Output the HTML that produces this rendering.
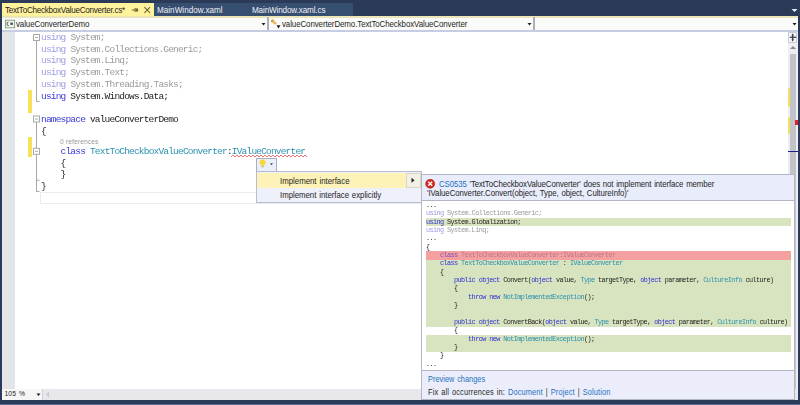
<!DOCTYPE html>
<html><head><meta charset="utf-8">
<style>
*{margin:0;padding:0;box-sizing:border-box}
html,body{width:800px;height:405px;overflow:hidden;background:#2a3a58;font-family:"Liberation Sans",sans-serif;position:relative}
.a{position:absolute}
.ui{position:absolute;transform-origin:0 0;transform:scaleX(0.9);font-family:"Liberation Sans",sans-serif;font-size:8px;white-space:nowrap;line-height:10px;color:#1e1e1e}
.code{position:absolute;will-change:transform;font-family:"Liberation Mono",monospace;font-size:9.5px;letter-spacing:-0.81px;white-space:pre;line-height:11.7px;color:#1e1e1e}
.kw{color:#3a3ad6}
.kwd{color:#9d9de6}
.dim{color:#9a9a9a}
.ty{color:#2b91af}
.pv{position:absolute;will-change:transform;font-family:"Liberation Mono",monospace;font-size:6.8px;letter-spacing:-0.57px;white-space:pre;line-height:8.34px;color:#1e1e1e}
.pv .kw{color:#3030d0}
.lnk{color:#1e6fbf}
.row{position:absolute;left:426px;width:365px;height:8.38px}
.g{background:#d8e4bf}
.r{background:#f5a0a0}
</style></head><body>
<!-- tabs -->
<div class="a" style="left:2px;top:3px;width:152px;height:14px;background:#fff29d"></div>
<div class="ui" style="left:5px;top:5.3px;font-size:9px;letter-spacing:-0.283px">TextToCheckboxValueConverter.cs*</div>
<svg class="a" style="left:130px;top:5px" width="24" height="11" viewBox="0 0 24 11">
 <rect x="1.8" y="4.5" width="3.2" height="1" fill="#6b6436"/>
 <rect x="4.6" y="3" width="1" height="4" fill="#6b6436"/>
 <rect x="5.6" y="3.5" width="2.5" height="3" fill="#6b6436"/>
 <path d="M14.4 2.2l5.6 5.6M20 2.2l-5.6 5.6" stroke="#6b6436" stroke-width="1.1" fill="none"/>
</svg>
<div class="a" style="left:154px;top:3px;width:199px;height:13px;background:#364e6f"></div>
<div class="ui" style="left:156.5px;top:5.3px;color:#f0f2f8;font-size:9px;letter-spacing:0.025px">MainWindow.xaml</div>
<div class="ui" style="left:252px;top:5.3px;color:#f0f2f8;font-size:9px;letter-spacing:-0.141px">MainWindow.xaml.cs</div>
<svg class="a" style="left:791px;top:8px" width="7" height="5"><path d="M0.5 1h6l-3 3z" fill="#e8ecf4"/></svg>
<!-- toolbar -->
<div class="a" style="left:2px;top:16px;width:796px;height:1.5px;background:#ebe5b9"></div>
<div class="a" style="left:2px;top:17.5px;width:796px;height:12.5px;background:#fbfbf9"></div>
<div class="a" style="left:2px;top:30px;width:796px;height:1.5px;background:#c6cde2"></div>
<svg class="a" style="left:4px;top:19px" width="12" height="10" viewBox="0 0 12 10">
 <rect x="1.4" y="1.2" width="9.2" height="7.6" fill="#eef4ec" stroke="#7e9a7e" stroke-width="0.9"/>
 <path d="M4.4 3.2a1.4 1.7 0 1 0 0.4 3.3" stroke="#3c4a3c" stroke-width="0.9" fill="none"/>
 <rect x="6.3" y="3.6" width="2.6" height="2.3" fill="#4a584a"/>
</svg>
<div class="ui" style="left:16px;top:18.9px;font-size:8.8px;letter-spacing:-0.094px">valueConverterDemo</div>
<svg class="a" style="left:261px;top:22px" width="5" height="4"><path d="M0.5 1h4l-2 2.5z" fill="#1e1e1e"/></svg>
<div class="a" style="left:266.5px;top:17px;width:2px;height:13px;background:#a9b0c0"></div>
<svg class="a" style="left:270px;top:18px" width="12" height="12" viewBox="0 0 12 12">
 <circle cx="2.5" cy="3" r="1.7" fill="#d9a441"/>
 <circle cx="5" cy="5" r="1.6" fill="#e4b45a"/>
 <path d="M6.5 7.2h4l-2 3.2z" fill="#222"/>
</svg>
<div class="ui" style="left:281.5px;top:18.9px;font-size:8.8px;letter-spacing:-0.101px">valueConverterDemo.TextToCheckboxValueConverter</div>
<svg class="a" style="left:527px;top:22px" width="5" height="4"><path d="M0.5 1h4l-2 2.5z" fill="#1e1e1e"/></svg>
<div class="a" style="left:533px;top:17px;width:2px;height:13px;background:#a9b0c0"></div>
<svg class="a" style="left:792px;top:22px" width="5" height="4"><path d="M0.5 1h4l-2 2.5z" fill="#1e1e1e"/></svg>
<!-- editor -->
<div class="a" style="left:2px;top:31.5px;width:796px;height:357px;background:#fff"></div>
<div class="a" style="left:2px;top:31.5px;width:12.5px;height:357px;background:linear-gradient(90deg,#e3e6f2 0,#e3e6f2 1px,#e5e5e7 1px,#e5e5e7 7px,#e1e6e8 7px)"></div>
<!-- current line box -->
<div class="a" style="left:40px;top:192px;width:747px;height:12px;border:1px solid #ececec"></div>
<!-- change bars -->
<div class="a" style="left:28.2px;top:90px;width:3.4px;height:22.7px;background:#f5e25a"></div>
<div class="a" style="left:28.2px;top:137px;width:3.4px;height:19.8px;background:#f5e25a"></div>
<!-- outlining -->
<svg class="a" style="left:30px;top:31px" width="14" height="165" viewBox="30 31 14 165">
 <g stroke="#a8a8a8" stroke-width="1" fill="none">
  <rect x="33.5" y="34.5" width="6" height="6" fill="#fff"/>
  <path d="M35 37.5h3"/>
  <path d="M36.5 40.5v61h3"/>
  <rect x="33.5" y="116" width="6" height="6" fill="#fff"/>
  <path d="M35 119h3"/>
  <path d="M36.5 122v69.5h3"/>
  <rect x="33.5" y="148.3" width="6" height="6" fill="#fff"/>
  <path d="M35 151.3h3"/>
  <path d="M36.5 154.3v26h3"/>
 </g>
</svg>
<!-- code -->
<div class="code" style="left:41px;top:32.2px"><span class="kwd">using</span> <span class="dim">System;</span>
<span class="kwd">using</span> <span class="dim">System.Collections.Generic;</span>
<span class="kwd">using</span> <span class="dim">System.Linq;</span>
<span class="kwd">using</span> <span class="dim">System.Text;</span>
<span class="kwd">using</span> <span class="dim">System.Threading.Tasks;</span>
<span class="kw">using</span> System.Windows.Data;

<span class="kw">namespace</span> valueConverterDemo
{</div>
<div class="ui" style="left:60px;top:137.3px;font-size:6.6px;letter-spacing:0.16px;transform:none;color:#989898">0 references</div>
<div class="code" style="left:41px;top:146.1px">    <span class="kw">class</span> <span class="ty">TextToCheckboxValueConverter</span>:<span class="ty">IValueConverter</span>
    {
    }
}</div>
<!-- squiggle -->
<svg class="a" style="left:231px;top:153.5px" width="76" height="5" viewBox="0 0 76 5">
 <path d="M0 3 L2 1 L4 3 L6 1 L8 3 L10 1 L12 3 L14 1 L16 3 L18 1 L20 3 L22 1 L24 3 L26 1 L28 3 L30 1 L32 3 L34 1 L36 3 L38 1 L40 3 L42 1 L44 3 L46 1 L48 3 L50 1 L52 3 L54 1 L56 3 L58 1 L60 3 L62 1 L64 3 L66 1 L68 3 L70 1 L72 3 L74 1 L76 3" stroke="#e25050" stroke-width="0.8" fill="none"/>
</svg>
<!-- vertical scrollbar -->
<div class="a" style="left:787.5px;top:31.5px;width:10.5px;height:357px;background:#ededf2"></div>
<div class="a" style="left:787.8px;top:32px;width:9.5px;height:10.5px;background:#f4f5fa;border:1px solid #c8ccd8"></div>
<svg class="a" style="left:788px;top:32px" width="10" height="11" viewBox="0 0 10 11">
 <path d="M1.8 5.3h6.4" stroke="#3c3c46" stroke-width="1.3"/>
 <path d="M4.7 3v5" stroke="#3c3c46" stroke-width="1.3"/>
 <path d="M3.3 3.2h2.8l-1.4-1.8z M3.3 7.6h2.8l-1.4 1.8z" fill="#3c3c46"/>
</svg>
<svg class="a" style="left:789px;top:45px" width="8" height="5"><path d="M1 4h6l-3-3z" fill="#868999"/></svg>
<div class="a" style="left:789.8px;top:53.6px;width:6.2px;height:335px;background:#c2c3c9"></div>
<div class="a" style="left:788px;top:88px;width:2.2px;height:18.5px;background:#f3e05c;border-radius:1px"></div>
<div class="a" style="left:788px;top:117px;width:2.2px;height:17px;background:#f3e05c;border-radius:1px"></div>
<div class="a" style="left:795px;top:119.5px;width:3px;height:5px;background:#e0202a"></div>
<div class="a" style="left:787.5px;top:151px;width:10.5px;height:1.2px;background:#1c1c8c"></div>
<!-- bottom bar -->
<div class="a" style="left:0;top:404px;width:800px;height:1px;background:#5a6a93"></div>
<div class="a" style="left:2px;top:388.5px;width:796px;height:11.5px;background:#e8e8ec"></div>
<div class="a" style="left:2px;top:388.5px;width:39.5px;height:11.5px;background:#f6f6f6"></div>
<div class="ui" style="left:4.5px;top:389.4px;font-size:6.8px;letter-spacing:0.087px;word-spacing:0.8px;transform:none">105 %</div>
<svg class="a" style="left:36px;top:393px" width="5" height="4"><path d="M0.5 0.5h4l-2 2.5z" fill="#1e1e1e"/></svg>
<div class="a" style="left:41.5px;top:388.5px;width:1px;height:11.5px;background:#d0d0d6"></div>
<svg class="a" style="left:45px;top:391px" width="5" height="7"><path d="M4 0.5v6l-3-3z" fill="#c8c8cf"/></svg>
<!-- light bulb -->
<div class="a" style="left:255.5px;top:158.2px;width:21.3px;height:13.4px;background:#ebeffa;border:1px solid #a9aec0"></div>
<svg class="a" style="left:256px;top:158px" width="20" height="13" viewBox="0 0 20 13">
 <defs><radialGradient id="gl"><stop offset="0.55" stop-color="#f8d838"/><stop offset="1" stop-color="#f8e890" stop-opacity="0"/></radialGradient></defs>
 <circle cx="6.6" cy="4.6" r="4.2" fill="url(#gl)"/>
 <rect x="5.6" y="7.6" width="2" height="1.8" fill="#b8b090"/>
 <path d="M14 5.5h3l-1.5 1.6z" fill="#111"/>
</svg>
<!-- menu -->
<div class="a" style="left:255.5px;top:171.3px;width:166px;height:31.8px;background:#eef0fa;border:1px solid #b8bccc"></div>
<div class="a" style="left:256.5px;top:173.3px;width:164px;height:14.4px;background:#fdf3b8"></div>
<div class="a" style="left:406px;top:173.3px;width:14.5px;height:14.4px;background:#f3f1e3;border:1px solid #d9d6c4"></div>
<svg class="a" style="left:410px;top:177px" width="6" height="7"><path d="M1.5 0.8v5l3-2.5z" fill="#1e1e1e"/></svg>
<div class="ui" style="left:279.8px;top:176px;font-size:8.7px;letter-spacing:0.006px;word-spacing:0.8px">Implement interface</div>
<div class="ui" style="left:279.8px;top:190px;font-size:8.7px;letter-spacing:-0.023px;word-spacing:0.8px">Implement interface explicitly</div>
<!-- preview -->
<div class="a" style="left:421px;top:173.5px;width:374px;height:226.5px;background:#fff;border:1px solid #b3b7c4"></div>
<div class="a" style="left:422px;top:174.5px;width:372px;height:26px;background:#e9edfb;border-bottom:1px solid #b3b7c4"></div>
<div class="a" style="left:422px;top:370px;width:372px;height:29px;background:#ebeefa;border-top:1px solid #b3b7c4"></div>
<svg class="a" style="left:425px;top:179px" width="11" height="10" viewBox="0 0 11 10">
 <circle cx="5.2" cy="4.7" r="4.5" fill="#d42a22" stroke="#a81a16" stroke-width="0.6"/>
 <path d="M3.2 2.7l4 4M7.2 2.7l-4 4" stroke="#fff" stroke-width="1.3"/>
</svg>
<div class="ui" style="left:439px;top:178.55px;font-size:8.7px;letter-spacing:-0.107px;word-spacing:0.8px"><span class="lnk">CS0535</span> 'TextToCheckboxValueConverter' does not implement interface member</div>
<div class="ui" style="left:426.5px;top:187.7px;font-size:8.7px;letter-spacing:-0.072px;word-spacing:0.8px">'IValueConverter.Convert(object, Type, object, CultureInfo)'</div>
<!-- preview rows -->
<div class="row g" style="top:217.66px"></div>
<div class="row r" style="top:251.18px"></div>
<div class="row g" style="top:259.56px;height:67.04px"></div>
<div class="row g" style="top:334.98px;height:16.76px"></div>
<div class="pv" style="left:426px;top:201.2px">...
<span class="kwd">using</span> <span class="dim">System.Collections.Generic;</span>
<span class="kw">using</span> System.Globalization;
<span class="kwd">using</span> <span class="dim">System.Linq;</span>
...
{
    <span style="color:#8050b8">class</span> <span style="color:#b87888">TextToCheckboxValueConverter</span><span style="color:#a06070">:</span><span style="color:#b87888">IValueConverter</span>
    <span class="kw">class</span> <span class="ty">TextToCheckboxValueConverter</span> : <span class="ty">IValueConverter</span>
    {
        <span class="kw">public</span> <span class="kw">object</span> Convert(<span class="kw">object</span> value, <span class="ty">Type</span> targetType, <span class="kw">object</span> parameter, <span class="ty">CultureInfo</span> culture)
        {
            <span class="kw">throw</span> <span class="kw">new</span> <span class="ty">NotImplementedException</span>();
        }

        <span class="kw">public</span> <span class="kw">object</span> ConvertBack(<span class="kw">object</span> value, <span class="ty">Type</span> targetType, <span class="kw">object</span> parameter, <span class="ty">CultureInfo</span> culture)
        {
            <span class="kw">throw</span> <span class="kw">new</span> <span class="ty">NotImplementedException</span>();
        }
    }
...</div>
<div class="ui lnk" style="left:427.5px;top:375px;font-size:8.2px;letter-spacing:0.023px;word-spacing:0.8px">Preview changes</div>
<div class="ui" style="left:427.5px;top:388px;font-size:8.2px;letter-spacing:0.175px;word-spacing:0.8px">Fix all occurrences in: <span class="lnk">Document</span> | <span class="lnk">Project</span> | <span class="lnk">Solution</span></div>
</body></html>
